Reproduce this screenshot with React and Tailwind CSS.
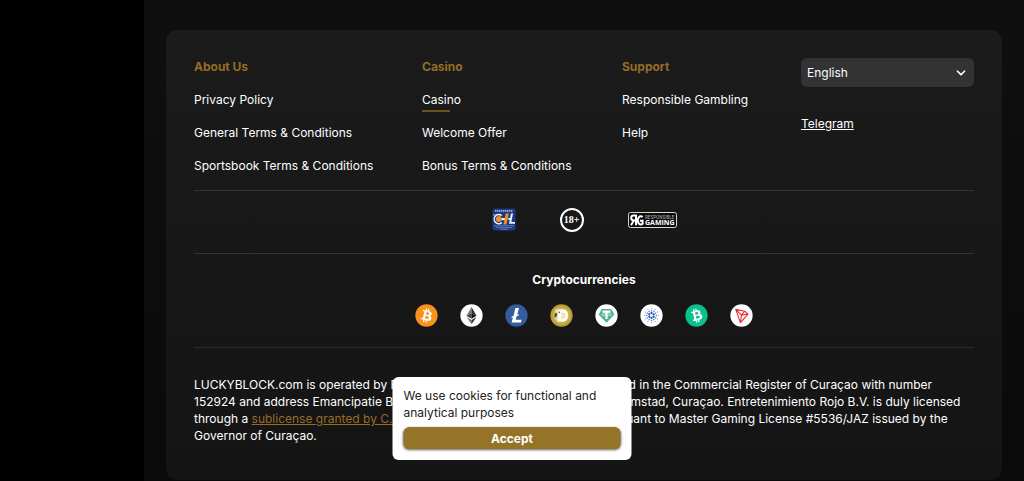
import { useState } from "react";
import { ChevronDown } from "lucide-react";

const columns = [
  {
    title: "About Us",
    links: ["Privacy Policy", "General Terms & Conditions", "Sportsbook Terms & Conditions"],
  },
  {
    title: "Casino",
    links: ["Casino", "Welcome Offer", "Bonus Terms & Conditions"],
    active: "Casino",
  },
  {
    title: "Support",
    links: ["Responsible Gambling", "Help"],
  },
];

function CilBadge() {
  return (
    <svg viewBox="0 0 24 24" className="h-6 w-6" role="img" aria-label="Licensed by CIL">
      <rect x="0.5" y="0.5" width="23" height="22" rx="2" fill="#1c3a80" />
      <path d="M3 2.8h18" stroke="#9fb0da" strokeWidth="1.8" strokeDasharray="1.4 0.6" />
      <path d="M1 7h8" stroke="#c3cde8" strokeWidth="0.8" />
      <path d="M9.800 7.600A4.600 4.600 0 1 0 9.800 14.600" fill="none" stroke="#eef1f8" strokeWidth="1.500" />
      <circle cx="6.800" cy="11" r="2.900" fill="#f09022" />
      <path d="M9.500 10h4.500v2.200H9.500z" fill="#eef1f8" />
      <path d="M13.800 5.500h3l-2.300 11h-3z" fill="#f09022" />
      <path d="M16.200 10h2v1.800h-2z" fill="#eef1f8" />
      <path d="M19 5.500h2L19.300 14H23v1.800h-6z" fill="#eef1f8" />
      <path d="M2 17.800h20M4 19.600h16M8 21.200h8" stroke="#7489c4" strokeWidth="0.800" />
    </svg>
  );
}

function AgeBadge() {
  return (
    <span className="flex h-6 w-6 items-center justify-center rounded-full border-2 border-white font-['Liberation_Serif',serif] text-[10px] font-bold leading-none">
      18+
    </span>
  );
}

function ResponsibleGamingBadge() {
  return (
    <svg viewBox="0 0 49 16" className="h-4 w-[49px]" role="img" aria-label="Responsible Gaming">
      <rect x="0.5" y="0.5" width="48" height="15" rx="2" fill="#0c0c0c" stroke="#d8d8d8" />
      <path d="M8 13.200V3.600H5.600a2.400 2.400 0 0 0 0 4.800H8M5.800 8.400 3 13.200" fill="none" stroke="#fff" strokeWidth="2" />
      <path d="M14.600 5A3.100 4.100 0 1 0 14.600 11.800V8.800H12" fill="none" stroke="#fff" strokeWidth="2" />
      <text x="17" y="6.6" fontSize="4.6" fill="#b5b5b5" fontFamily="Roboto, sans-serif">RESPONSIBLE</text>
      <text x="17" y="13.4" fontSize="7" fontWeight="700" fill="#fff" fontFamily="Open Sans, sans-serif">GAMING</text>
    </svg>
  );
}

function Coin({ label, color, children }) {
  return (
    <li>
      <svg viewBox="0 0 32 32" className="h-[23px] w-[23px]" role="img" aria-label={label}>
        <circle cx="16" cy="16" r="15.5" fill={color} />
        {children}
      </svg>
    </li>
  );
}

const bitcoinPath =
  "M23.19 14.02c.31-2.1-1.28-3.22-3.47-3.98l.71-2.84-1.73-.43-.69 2.77-1.38-.33.69-2.78-1.72-.43-.71 2.84-1.1-.26-2.39-.6-.46 1.85s1.28.29 1.26.31c.7.18.82.64.8 1l-1.95 7.77c-.08.21-.3.53-.79.41.02.03-1.26-.31-1.26-.31l-.86 1.98 3.49.88-.72 2.87 1.73.43.71-2.84 1.38.36-.71 2.83 1.73.43.71-2.87c2.95.56 5.17.33 6.1-2.33.75-2.15-.04-3.39-1.59-4.2 1.13-.25 1.98-1 2.21-2.53Zm-3.95 5.54c-.53 2.15-4.15.99-5.32.7l.95-3.81c1.17.3 4.93.88 4.37 3.11Zm.54-5.57c-.49 1.95-3.5.96-4.47.72l.86-3.46c.97.25 4.12.7 3.61 2.74Z";

const rays = Array.from({ length: 12 }, (_, i) => i * 30);

function CoinList() {
  return (
    <ul className="flex justify-center gap-[22px]">
      <Coin label="Bitcoin" color="#f7931a">
        <path d={bitcoinPath} fill="#fff" />
      </Coin>
      <Coin label="Ethereum" color="#fff">
        <path d="M16 4v9l-7 3.300z" fill="#777" />
        <path d="M16 4v9l7 3.300z" fill="#303030" />
        <path d="M9 16.300 16 13v7.400z" fill="#444" />
        <path d="M23 16.300 16 13v7.400z" fill="#111" />
        <path d="M9 18l7 4.100V28z" fill="#777" />
        <path d="M23 18l-7 4.100V28z" fill="#303030" />
      </Coin>
      <Coin label="Litecoin" color="#345d9d">
        <path d="M14.500 5.500h5l-2.600 9.300 2.700-1-.6 2.300-2.800 1.100-1.300 4.600h8.200l-1 3.900H9.200l1.900-6.800-2.200.9.7-2.400 2.200-.8z" fill="#fff" />
      </Coin>
      <Coin label="Dogecoin" color="#ba9f33">
        <circle cx="16" cy="16" r="12.500" fill="#c9b14b" />
        <path d="M7 8l4-1h8c4.500 1 6.500 5 6.500 9s-2 8-6.500 9h-8l-4-4z" fill="#e6dcae" />
        <path
          d="M11 8h7c4.500 0 7 3 7 8s-2.500 8-7 8h-7zm4.500 4v8h2.500c2 0 3-1.500 3-4s-1-4-3-4z"
          fill="#fffdf3"
          fillRule="evenodd"
        />
        <path d="M15.500 14.800h3v2.400h-3z" fill="#fffdf3" />
        <path d="M7 13l2-1 1 3-2 4-1.500-2z" fill="#4e4321" />
        <circle cx="13" cy="11.500" r="1.100" fill="#4e4321" />
      </Coin>
      <Coin label="Tether" color="#fff">
        <path d="M9.500 7h13L27 14.500 16 26 5 14.500z" fill="#50af95" />
        <path d="M10.500 9h11v3h-4v9h-3v-9h-4z" fill="#fff" />
        <ellipse cx="16" cy="14.800" rx="7" ry="1.500" fill="none" stroke="#fff" strokeWidth="0.800" />
      </Coin>
      <Coin label="Cardano" color="#fff">
        {rays.map((angle) => (
          <g key={angle} transform={`rotate(${angle} 16 16)`} fill="#2a58c4">
            {angle % 60 === 0 && <circle cx="16" cy="12.500" r="1.600" />}
            <circle cx="16" cy="9.300" r="0.900" />
            <circle cx="16" cy="6.300" r="0.600" />
          </g>
        ))}
      </Coin>
      <Coin label="Bitcoin Cash" color="#0ac18e">
        <path d={bitcoinPath} fill="#fff" transform="rotate(-28 16 16)" />
      </Coin>
      <Coin label="Tron" color="#fff">
        <path
          d="M8 7.500 20.500 10l4.500 4-10.500 12zM8 7.500l8 8L14.500 26M16 15.500l4.500-5.500M16 15.500l9-1.500"
          fill="none"
          stroke="#ef2b33"
          strokeWidth="1.500"
          strokeLinejoin="round"
        />
      </Coin>
    </ul>
  );
}

function FooterColumn({ title, links, active }) {
  return (
    <nav aria-label={title}>
      <h2 className="mb-4 font-bold text-[#956d25]">{title}</h2>
      <ul className="flex flex-col gap-4">
        {links.map((link) => (
          <li key={link} className="relative">
            <a href="#" className="whitespace-nowrap">{link}</a>
            {link === active && <span className="absolute -bottom-1 left-0 h-0.5 w-7 bg-[#6b5120]" />}
          </li>
        ))}
      </ul>
    </nav>
  );
}

function LanguageSelect() {
  return (
    <div className="relative">
      <select
        aria-label="Language"
        className="h-[29px] w-full appearance-none rounded-md bg-[#333] px-1.5 text-white"
        defaultValue="English"
      >
        <option>English</option>
      </select>
      <ChevronDown className="pointer-events-none absolute right-1.5 top-2 h-3.5 w-3.5" strokeWidth={3} />
    </div>
  );
}

function CookieBanner({ onAccept }) {
  return (
    <div
      role="dialog"
      aria-label="Cookies"
      className="fixed bottom-[21px] left-1/2 w-[239px] -translate-x-1/2 rounded-md bg-white px-[11px] pb-[11px] pt-2.5 text-[#222]"
    >
      <p>We use cookies for functional and analytical purposes</p>
      <button
        type="button"
        onClick={onAccept}
        className="mt-1.5 h-[22px] w-full rounded-md bg-[#957428] font-bold text-white shadow-sm shadow-black/50"
      >
        Accept
      </button>
    </div>
  );
}

function App() {
  const [accepted, setAccepted] = useState(false);

  return (
    <div className="flex min-h-screen bg-black font-['Inter',sans-serif] text-[12px] leading-[17px] text-white">
      <aside className="w-36 shrink-0 bg-black" />
      <main className="min-w-0 flex-1 bg-linear-to-b from-[#0f0f0f] to-[#0a0a0a] px-[22px] pt-[30px]">
        <footer className="rounded-xl bg-linear-to-b from-[#1b1b1b] to-[#141414] px-7 pb-9 pt-7">
          <div className="grid grid-cols-[228fr_200fr_179fr_173fr] border-b border-[#333] pb-4">
            {columns.map((column) => (
              <FooterColumn key={column.title} {...column} />
            ))}
            <div>
              <LanguageSelect />
              <a href="#" className="mt-7 inline-block underline">Telegram</a>
            </div>
          </div>

          <div className="flex h-[63px] items-center justify-center gap-11 border-b border-[#333] pb-1">
            <CilBadge />
            <AgeBadge />
            <ResponsibleGamingBadge />
          </div>

          <section className="border-b border-[#2b2b2b] pb-5 pt-[17px] text-center">
            <h2 className="mb-4 font-bold">Cryptocurrencies</h2>
            <CoinList />
          </section>

          <p className="pt-7">
            LUCKYBLOCK.com is operated by Entretenimiento Rojo B.V., a company listed in the Commercial Register of
            Curaçao with number 152924 and address Emancipatie Boulevard Dominico F. "Don" Martina, Willemstad,
            Curaçao. Entretenimiento Rojo B.V. is duly licensed through a{" "}
            <a href="#" className="text-[#956d25] underline">
              sublicense granted by C.I.L. Curaçao Interactive License N.V.
            </a>{" "}
            pursuant to Master Gaming License #5536/JAZ issued by the Governor of Curaçao.
          </p>
        </footer>
      </main>
      {!accepted && <CookieBanner onAccept={() => setAccepted(true)} />}
    </div>
  );
}

export default App;
